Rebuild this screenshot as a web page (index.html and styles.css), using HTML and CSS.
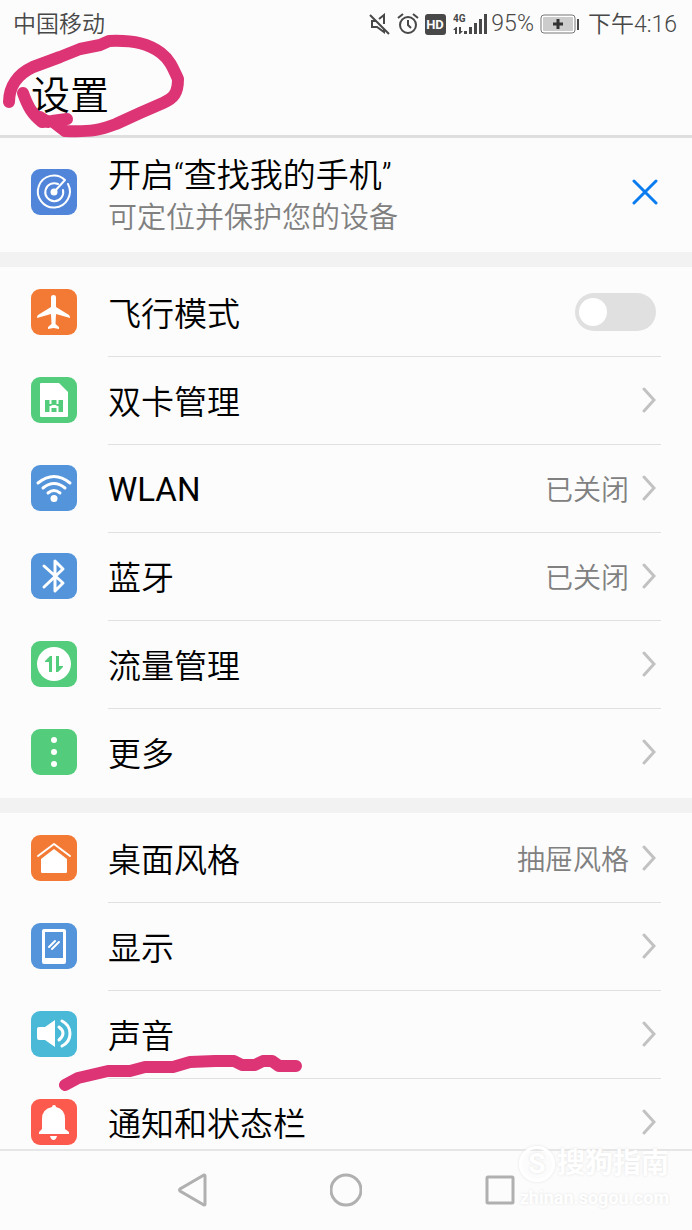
FILE: index.html
```
<!DOCTYPE html>
<html lang="zh-CN">

<head>
    <meta charset="UTF-8">
    <meta name="viewport" content="width=device-width, initial-scale=1">
    <title>设置</title>
    <link rel="stylesheet" href="styles.css">
</head>

<body>
    <div class="statusBar">
        <span class="carrier">中国移动</span>
        <svg class="muteIcon" width="22" height="22" viewBox="0 0 22 22" fill="none" stroke="#484848" stroke-width="2">
            <path d="M1 2L20 21M7 8H3V14H8L15 19V16M10 6L15 2V11"/>
        </svg>
        <svg class="alarmIcon" width="22" height="22" viewBox="0 0 22 22" fill="none" stroke="#484848" stroke-width="2">
            <circle cx="11" cy="12" r="8"/>
            <path d="M11 7V12L14 15M1 5L6 1M21 5L16 1"/>
        </svg>
        <svg class="hdIcon" width="21" height="21" viewBox="0 0 21 21">
            <rect width="21" height="21" rx="3" fill="#484848"/>
            <text x="10" y="15" text-anchor="middle" font-size="13" font-weight="700" fill="#fcfcfc">HD</text>
        </svg>
        <svg class="signalIcon" width="34" height="22" viewBox="0 0 34 22" fill="#484848">
            <text x="0" y="9" font-size="10" font-weight="700">4G</text>
            <path d="M3 14L0 17H2V21H4V14ZM7 21L10 18H8V14H6V21Z"/>
            <path d="M11 18H14V21H11ZM16 14H19V21H16ZM21 10H24V21H21ZM26 6H29V21H26ZM31 1H34V21H31Z"/>
        </svg>
        <span class="percent">95%</span>
        <svg class="batteryIcon" width="40" height="20" viewBox="0 0 40 20">
            <rect x="1" y="1" width="34" height="18" rx="3" fill="#fff" stroke="#777"/>
            <rect x="3" y="3" width="30" height="14" rx="1" fill="#ccc"/>
            <path d="M18 5V15M13 10H23" stroke="#333" stroke-width="3"/>
            <rect x="37" y="5" width="2" height="11" fill="#484848"/>
        </svg>
        <span class="clock">下午4:16</span>
    </div>
    <header class="titleBar">
        <h1>设置</h1>
    </header>
    <svg class="circleMark" width="192" height="140" viewBox="0 0 192 140">
        <path d="M9 102C9 86 18 74 33 67L60 57L80 49L100 45L109 41C135 40 149 44 161 53C170 60 173 68 178 79C178 93 174 98 163 103L140 113L116 124C100 130 92 132 65 131L52 121M23 93C28 107 32 114 42 122L52 121L67 119M40 117L48 122"/>
    </svg>

    <main class="settings">
        <section class="findPhone">
            <svg class="icon" viewBox="0 0 46 46">
                <rect class="blueDeep" width="46" height="46" rx="9"/>
                <g class="line thin">
                    <path d="M37 15A16 16 0 1 1 34 11L23 23"/>
                    <path d="M32 21A9 9 0 1 1 27 15"/>
                </g>
                <circle class="solid" cx="23" cy="23" r="3.5"/>
            </svg>
            <div class="findText">
                <h2>开启“查找我的手机”</h2>
                <p>可定位并保护您的设备</p>
            </div>
            <button class="closeButton" type="button" aria-label="关闭">
                <svg width="26" height="26" viewBox="0 0 26 26"><path d="M2 2L24 24M24 2L2 24"/></svg>
            </button>
        </section>

        <section class="group">
            <div class="row">
                <svg class="icon" viewBox="0 0 46 46">
                    <rect class="orange" width="46" height="46" rx="9"/>
                    <path class="solid" d="M20 8Q20 6 22.500 6Q25 6 25 8V18L38 26Q39 27 39 29L25 25L24.500 35L28 38V40L22.500 39L17 40V38L20.500 35L20 25L6 29Q6 27 7 26L20 18Z"/>
                </svg>
                <div class="rowBody">
                    <label class="name" for="airplane">飞行模式</label>
                    <input class="toggle" id="airplane" type="checkbox">
                </div>
            </div>
            <a class="row" href="#sim">
                <svg class="icon" viewBox="0 0 46 46">
                    <rect class="green" width="46" height="46" rx="9"/>
                    <path class="solid" d="M10 6H28L37 15V39Q37 40 36 40H10Q9 40 9 39V7Q9 6 10 6Z"/>
                    <path class="green" d="M14 23H18.500V35H14ZM20.500 23H25.500V28H20.500ZM20.500 31H25.500V35H20.500ZM27.500 23H32V35H27.500ZM18 27H20.500V29H18ZM25.500 27H28V29H25.500Z"/>
                </svg>
                <div class="rowBody">
                    <span class="name">双卡管理</span>
                    <svg class="chevron" viewBox="0 0 14 28"><path d="M2 3L12 14L2 25"/></svg>
                </div>
            </a>
            <a class="row" href="#wlan">
                <svg class="icon" viewBox="0 0 46 46">
                    <rect class="blue" width="46" height="46" rx="9"/>
                    <g class="line">
                        <path d="M7 18Q23 5 39 18M12 23Q23 14 34 23M17 28Q23 23 29 28"/>
                    </g>
                    <circle class="solid" cx="23" cy="33.5" r="3.5"/>
                </svg>
                <div class="rowBody">
                    <span class="name latin">WLAN</span>
                    <span class="value">已关闭</span>
                    <svg class="chevron" viewBox="0 0 14 28"><path d="M2 3L12 14L2 25"/></svg>
                </div>
            </a>
            <a class="row" href="#bluetooth">
                <svg class="icon" viewBox="0 0 46 46">
                    <rect class="blue" width="46" height="46" rx="9"/>
                    <path class="line" d="M13 13L32 30L24 38V8L32 16L13 34"/>
                </svg>
                <div class="rowBody">
                    <span class="name">蓝牙</span>
                    <span class="value">已关闭</span>
                    <svg class="chevron" viewBox="0 0 14 28"><path d="M2 3L12 14L2 25"/></svg>
                </div>
            </a>
            <a class="row" href="#data">
                <svg class="icon" viewBox="0 0 46 46">
                    <rect class="green" width="46" height="46" rx="9"/>
                    <circle class="solid" cx="23" cy="23" r="17"/>
                    <path class="green" d="M21 15V31H18V21H14V20L19 15ZM25 15H28V25H32V26L27 31H25Z"/>
                </svg>
                <div class="rowBody">
                    <span class="name">流量管理</span>
                    <svg class="chevron" viewBox="0 0 14 28"><path d="M2 3L12 14L2 25"/></svg>
                </div>
            </a>
            <a class="row" href="#more">
                <svg class="icon" viewBox="0 0 46 46">
                    <rect class="green" width="46" height="46" rx="9"/>
                    <g class="solid">
                        <circle cx="23" cy="11" r="3"/>
                        <circle cx="23" cy="23" r="3"/>
                        <circle cx="23" cy="35" r="3"/>
                    </g>
                </svg>
                <div class="rowBody">
                    <span class="name">更多</span>
                    <svg class="chevron" viewBox="0 0 14 28"><path d="M2 3L12 14L2 25"/></svg>
                </div>
            </a>
        </section>

        <section class="group">
            <a class="row" href="#home-style">
                <svg class="icon" viewBox="0 0 46 46">
                    <rect class="orange" width="46" height="46" rx="9"/>
                    <path class="line thin" d="M7 21L23 9L39 21"/>
                    <path class="solid" d="M23 14L36 24V37Q36 38 35 38H11Q10 38 10 37V24Z"/>
                </svg>
                <div class="rowBody">
                    <span class="name">桌面风格</span>
                    <span class="value">抽屉风格</span>
                    <svg class="chevron" viewBox="0 0 14 28"><path d="M2 3L12 14L2 25"/></svg>
                </div>
            </a>
            <a class="row" href="#display">
                <svg class="icon" viewBox="0 0 46 46">
                    <rect class="blue" width="46" height="46" rx="9"/>
                    <rect class="solid" x="11" y="6" width="24" height="35" rx="2"/>
                    <rect class="blue" x="14" y="9" width="18" height="26"/>
                    <path class="line thin" d="M18 24L24 18M21 26L28 19"/>
                </svg>
                <div class="rowBody">
                    <span class="name">显示</span>
                    <svg class="chevron" viewBox="0 0 14 28"><path d="M2 3L12 14L2 25"/></svg>
                </div>
            </a>
            <a class="row" href="#sound">
                <svg class="icon" viewBox="0 0 46 46">
                    <rect class="cyan" width="46" height="46" rx="9"/>
                    <path class="solid" d="M8 16H14L24 9V36L14 29H8Q6 29 6 27V18Q6 16 8 16Z"/>
                    <path class="line" d="M28 16Q36 22 28 29M31 10Q39 14 39 22.500Q39 31 31 35"/>
                </svg>
                <div class="rowBody">
                    <span class="name">声音</span>
                    <svg class="chevron" viewBox="0 0 14 28"><path d="M2 3L12 14L2 25"/></svg>
                </div>
                <svg class="underMark" width="246" height="38" viewBox="0 0 246 38">
                    <path d="M7 30L20 23L50 16H72L87 12H115L132 7L157 6H176L184 10H197L205 6H214L221 11H238"/>
                </svg>
            </a>
            <a class="row" href="#notifications">
                <svg class="icon" viewBox="0 0 46 46">
                    <rect class="red" width="46" height="46" rx="9"/>
                    <path class="solid" d="M21 8Q21 6 23 6Q25 6 25 8Q34 10 34 20V30L38 33V35H8V33L11 30V20Q11 10 21 8ZM19 37H26Q25 41 22.500 41Q20 41 19 37Z"/>
                </svg>
                <div class="rowBody">
                    <span class="name">通知和状态栏</span>
                    <svg class="chevron" viewBox="0 0 14 28"><path d="M2 3L12 14L2 25"/></svg>
                </div>
            </a>
        </section>
    </main>

    <nav class="navBar">
        <button type="button" aria-label="返回">
            <svg width="32" height="34" viewBox="0 0 32 34"><path d="M29 3V31Q29 32 28 32L4 18Q3 17 4 16L28 2Q29 2 29 3Z"/></svg>
        </button>
        <button type="button" aria-label="主页">
            <svg width="32" height="34" viewBox="0 0 32 34"><circle cx="16" cy="17" r="15"/></svg>
        </button>
        <button type="button" aria-label="最近任务">
            <svg width="32" height="34" viewBox="0 0 32 34"><rect x="3" y="4" width="26" height="26" rx="1"/></svg>
        </button>
        <div class="watermark">
            <div class="brand"><span class="logo">S</span>搜狗指南</div>
            <div class="site">zhinan.sogou.com</div>
        </div>
    </nav>
</body>

</html>
```
FILE: styles.css
```
* {
    box-sizing: border-box;
}
body {
    margin: 0;
    height: 100vh;
    display: flex;
    flex-direction: column;
    position: relative;
    overflow: hidden;
    background: #fcfcfc;
    color: #000;
    font-family: Roboto, "Noto Sans CJK SC", sans-serif;
    font-weight: 350;
}
h1, h2, p {
    margin: 0;
    font-weight: 350;
}
svg {
    display: block;
    flex-shrink: 0;
}
button {
    background: none;
    border: 0;
    padding: 0;
}

/* status bar */
.statusBar {
    height: 48px;
    flex-shrink: 0;
    display: flex;
    align-items: center;
    padding: 0 15px 0 13px;
    font-size: 23px;
    line-height: 32px;
    color: #484848;
    white-space: nowrap;
}
.statusBar svg {
    font-family: Roboto, sans-serif;
}
.carrier, .clock {
    padding-top: 2px;
}
.carrier {
    margin-right: auto;
}
.alarmIcon, .hdIcon, .batteryIcon {
    margin-left: 6px;
}
.signalIcon {
    margin-left: 7px;
}
.percent {
    margin-left: 4px;
}
.clock {
    margin-left: 8px;
}

/* title */
.titleBar {
    height: 90px;
    flex-shrink: 0;
    display: flex;
    align-items: center;
    padding-top: 8px;
    padding-left: 31px;
    border-bottom: 3px solid #dfdfdf;
}
h1 {
    font-size: 39px;
    line-height: 56px;
}
.circleMark {
    position: absolute;
    top: 0;
    left: 0;
}
.circleMark path, .underMark path {
    fill: none;
    stroke: #dc3475;
    stroke-width: 12px;
    stroke-linecap: round;
    stroke-linejoin: round;
}
.underMark {
    position: absolute;
    top: 64px;
    left: 58px;
    z-index: 1;
}

.settings {
    flex: 1;
    min-height: 0;
    overflow: hidden;
}
.findPhone {
    display: flex;
    align-items: center;
    padding: 7px 34px 13px 31px;
}
.findText {
    flex: 1;
    margin-left: 31px;
    padding-top: 10px;
}
h2 {
    font-size: 33px;
    line-height: 42px;
}
.findText p {
    font-size: 29px;
    line-height: 42px;
    color: #808080;
}
.closeButton path {
    fill: none;
    stroke: #0a7cf0;
    stroke-width: 3px;
    stroke-linecap: round;
}

.group {
    border-top: 15px solid #f2f2f2;
    padding: 2px 0 1px;
}
.row {
    position: relative;
    display: flex;
    align-items: center;
    height: 88px;
    padding: 0 31px;
    color: inherit;
    text-decoration: none;
}
.row .icon {
    margin-bottom: 2px;
}
.rowBody {
    flex: 1;
    display: flex;
    align-items: center;
    height: 100%;
    margin-left: 31px;
    padding-right: 5px;
    padding-bottom: 2px;
    border-bottom: 1px solid #e0e0e0;
}
.row:last-child .rowBody {
    border-bottom-color: transparent;
}
.name, .value {
    padding-top: 6px;
}
.name {
    margin-right: auto;
    font-size: 33px;
    line-height: 48px;
}
.latin {
    padding-top: 4px;
    font-weight: 400;
}
.value {
    font-size: 28px;
    line-height: 40px;
    margin-right: 13px;
    color: #808080;
}
.chevron {
    width: 14px;
    height: 28px;
    fill: none;
    stroke: #c2c2c2;
    stroke-width: 3px;
    stroke-linecap: round;
}
.toggle {
    appearance: none;
    width: 81px;
    height: 38px;
    margin: 0;
    padding: 5px 4px;
    border-radius: 19px;
    background: #e0e0e0;
}
.toggle::before {
    content: "";
    display: block;
    width: 28px;
    height: 28px;
    border-radius: 50%;
    background: #fff;
}
.toggle:checked {
    background: #0a7cf0;
}
.toggle:checked::before {
    margin-left: auto;
}

/* icons */
.icon {
    width: 46px;
    height: 46px;
}
.solid {
    fill: #fff;
}
.line {
    fill: none;
    stroke: #fff;
    stroke-width: 3px;
    stroke-linecap: round;
    stroke-linejoin: round;
}
.thin {
    stroke-width: 2px;
}
.blueDeep {
    fill: #5085da;
}
.blue {
    fill: #5494da;
}
.green {
    fill: #53cc7c;
}
.orange {
    fill: #f37a35;
}
.cyan {
    fill: #49b9d7;
}
.red {
    fill: #fc5a4c;
}

/* navigation keys */
.navBar {
    position: relative;
    height: 81px;
    flex-shrink: 0;
    display: flex;
    justify-content: center;
    align-items: center;
    gap: 122px;
    padding-bottom: 2px;
    border-top: 2px solid #e6e6e6;
}
.navBar svg {
    fill: none;
    stroke: #b0b0b0;
    stroke-width: 3px;
}
.watermark {
    position: absolute;
    right: 23px;
    top: -9px;
    color: #fff;
    font-weight: 700;
    text-shadow: 0 0 3px #e2e2e2;
    white-space: nowrap;
}
.brand {
    display: flex;
    align-items: center;
    font-size: 28px;
    line-height: 44px;
}
.logo {
    width: 36px;
    height: 36px;
    margin-right: 2px;
    border: 3px solid #fff;
    border-radius: 50%;
    box-shadow: 0 0 3px #e2e2e2;
    line-height: 30px;
    text-align: center;
}
.site {
    font-size: 18px;
    line-height: 24px;
    text-align: right;
}
```
